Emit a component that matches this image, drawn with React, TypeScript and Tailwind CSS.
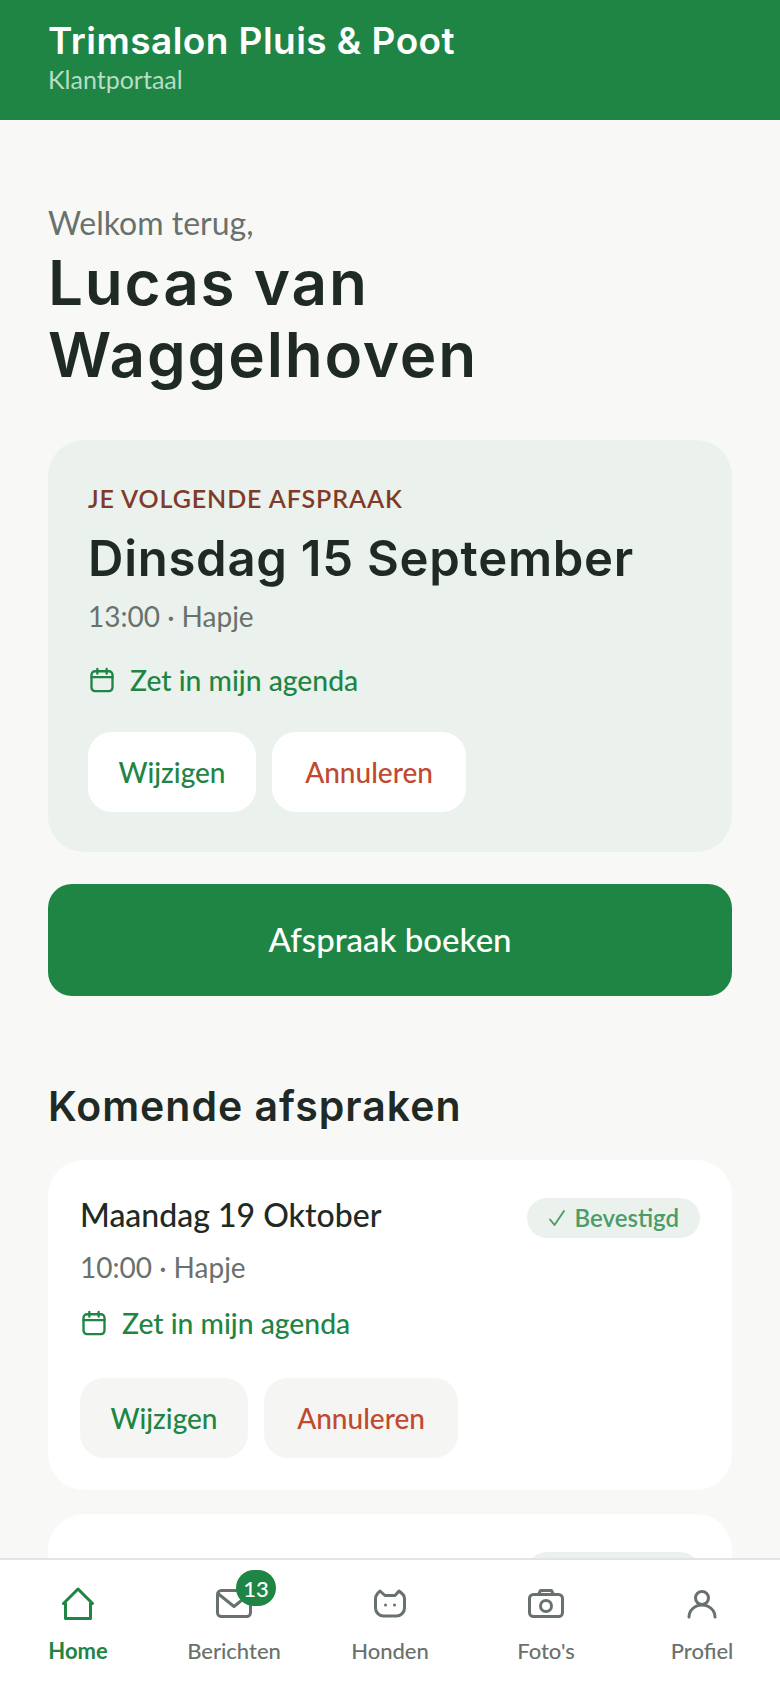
import React from "react";

const BODY = "font-['Lato','Noto_Sans',sans-serif]";

function Cal({ className }: { className?: string }) {
  return (
    <svg viewBox="0 0 24 24" className={className} fill="none" stroke="currentColor" strokeWidth="2" strokeLinecap="round" strokeLinejoin="round">
      <rect x="3" y="4.5" width="18" height="17" rx="3" />
      <path d="M8 2.5v4M16 2.5v4M3 9.5h18" />
    </svg>
  );
}

function Agenda({ mt }: { mt: string }) {
  return (
    <div className={`flex items-center gap-[14px] text-[#1f8544] text-[28.3px] leading-[36px] font-medium ${mt}`}>
      <Cal className="w-[28px] h-[28px]" />
      <span>Zet in mijn agenda</span>
    </div>
  );
}

function Actions({ bg, mt }: { bg: string; mt: string }) {
  return (
    <div className={`flex gap-4 ${mt}`}>
      <button className={`h-[80px] w-[168px] rounded-[24px] text-[28px] font-medium text-[#1f8544] ${bg}`}>Wijzigen</button>
      <button className={`h-[80px] w-[194px] rounded-[24px] text-[28px] font-medium text-[#c0492f] ${bg}`}>Annuleren</button>
    </div>
  );
}

function Badge() {
  return (
    <span className="flex items-center h-[40px] px-[21px] gap-[9px] rounded-full bg-[#ebf2ed] text-[#4c9c69] text-[24px] font-semibold">
      <svg viewBox="0 0 18 18" className="w-[18px] h-[18px]" fill="none" stroke="currentColor" strokeWidth="1.9" strokeLinecap="round" strokeLinejoin="round">
        <path d="M2 10.5 6.5 16 16 2" />
      </svg>
      Bevestigd
    </span>
  );
}

function NavItem({ label, active, children }: { label: string; active?: boolean; children: React.ReactNode }) {
  return (
    <div className={`flex flex-col items-center w-[156px] ${active ? "text-[#1f8544] font-bold" : "text-[#69716d] font-medium"}`}>
      <div className="relative w-[40px] h-[40px]">{children}</div>
      <span className="text-[22px] leading-[28px] mt-[13px]">{label}</span>
    </div>
  );
}

const iconProps = {
  viewBox: "0 0 40 40",
  className: "w-[40px] h-[40px]",
  fill: "none",
  stroke: "currentColor",
  strokeWidth: 3,
  strokeLinecap: "round" as const,
  strokeLinejoin: "round" as const,
};

export default function App() {
  return (
    <div className={`h-[1688px] w-[780px] overflow-hidden flex flex-col bg-[#f8f9f7] text-[#1f2a24] ${BODY}`}>
      <header className="h-[120px] shrink-0 bg-[#1f8544] px-[48px] pt-[17px]">
        <div className="font-['Inter',sans-serif] font-semibold text-[37px] tracking-[0.45px] leading-[48px] text-white">Trimsalon Pluis &amp; Poot</div>
        <div className="text-[25px] leading-[32px] text-[#b9dcc5] -mt-[2px]">Klantportaal</div>
      </header>

      <main className="flex-1 min-h-0 overflow-hidden px-[48px] pt-[83px]">
        <p className="text-[32px] leading-[40px] text-[#69716d]">Welkom terug,</p>
        <h1 className="font-['Inter',sans-serif] font-semibold text-[62px] tracking-[1.8px] leading-[72px] mt-[4px]">Lucas van Waggelhoven</h1>

        <section className="mt-[49px] h-[412px] rounded-[36px] bg-[#ebf1ec] px-[40px] pt-[42px]">
          <div className="text-[25px] leading-[32px] font-semibold tracking-[0.9px] text-[#7f3b28]">JE VOLGENDE AFSPRAAK</div>
          <div className="font-['Inter',sans-serif] font-semibold text-[49px] tracking-[0.75px] leading-[60px] mt-[15px]">Dinsdag 15 September</div>
          <div className="text-[28px] leading-[36px] text-[#69716d] mt-[9px]">13:00 · Hapje</div>
          <Agenda mt="mt-[28px]" />
          <Actions bg="bg-white" mt="mt-[34px]" />
        </section>

        <button className="mt-[32px] w-full h-[112px] rounded-[24px] bg-[#1f8544] text-white text-[33px] font-medium">Afspraak boeken</button>

        <h2 className="font-['Inter',sans-serif] font-semibold text-[41px] tracking-[1px] leading-[52px] mt-[84px]">Komende afspraken</h2>

        <section className="mt-[28px] h-[330px] rounded-[36px] bg-white px-[32px] pt-[35px]">
          <div className="flex items-start justify-between">
            <div className="text-[32px] leading-[40px] font-medium">Maandag 19 Oktober</div>
            <div className="mt-[3px]"><Badge /></div>
          </div>
          <div className="text-[28px] leading-[36px] text-[#69716d] mt-[11px]">10:00 · Hapje</div>
          <Agenda mt="mt-[20px]" />
          <Actions bg="bg-[#f5f6f4]" mt="mt-[37px]" />
        </section>

        <section className="mt-[24px] h-[330px] rounded-[36px] bg-white px-[32px] pt-[37px]">
          <div className="flex items-start justify-between">
            <div className="text-[32px] leading-[40px] font-medium">Donderdag 12 November</div>
            <div className="mt-[1px]"><Badge /></div>
          </div>
        </section>
      </main>

      <nav className="h-[130px] shrink-0 bg-white border-t-2 border-[#e4e5e3] flex pt-[24px]">
        <NavItem label="Home" active>
          <svg {...iconProps}><path d="M5.5 19.5 20 5l14.5 14.5h-2V34.5h-25V19.5z" /></svg>
        </NavItem>
        <NavItem label="Berichten">
          <svg {...iconProps}><rect x="3.5" y="6.5" width="33" height="26" rx="4" /><path d="m4.5 10 15.5 12.5L35.5 10" /></svg>
          <span className="absolute left-[22px] top-[-14px] w-[40px] h-[36px] rounded-full bg-[#1f8544] text-white text-[22px] font-medium flex items-center justify-center">13</span>
        </NavItem>
        <NavItem label="Honden">
          <svg {...iconProps}>
            <path d="M5.5 15q0-3 2-5.5L10 7l5 4.5h10L29 7l3 2.5q2.5 2 2.5 5V24a8 8 0 0 1-8 8h-13a8 8 0 0 1-8-8z" />
            <path d="M15.5 21h.01M24.5 21h.01" />
          </svg>
        </NavItem>
        <NavItem label="Foto's">
          <svg {...iconProps}>
            <rect x="3.5" y="10.5" width="33" height="22" rx="4" />
            <path d="M12.5 10.5l2-4h11l2 4" />
            <circle cx="20" cy="22" r="5.5" />
          </svg>
        </NavItem>
        <NavItem label="Profiel">
          <svg {...iconProps}>
            <circle cx="20" cy="14" r="6.5" />
            <path d="M7 33a13 12 0 0 1 26 0" />
          </svg>
        </NavItem>
      </nav>
    </div>
  );
}
